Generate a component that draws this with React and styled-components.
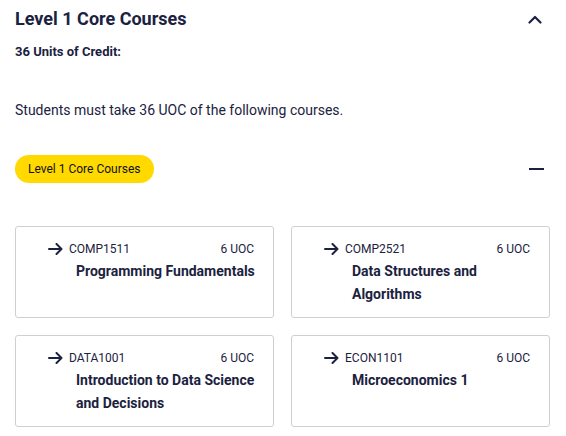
import React from "react";
import styled, { createGlobalStyle } from "styled-components";

const Global = createGlobalStyle`
  * { box-sizing: border-box; }
  body {
    margin: 0;
    background: #ffffff;
    font-family: Roboto, "Liberation Sans", Arial, sans-serif;
    color: #1b2240;
  }
`;

const Page = styled.div`
  width: 566px;
  padding: 5px 16px 0 15px;
`;

const HeaderRow = styled.div`
  display: flex;
  align-items: center;
  justify-content: space-between;
  height: 28px;
`;

const Title = styled.h2`
  margin: 0;
  font-size: 18px;
  font-weight: 700;
  line-height: 24px;
  color: #1b2240;
`;

const IconButton = styled.button`
  display: flex;
  align-items: center;
  justify-content: center;
  width: 24px;
  height: 24px;
  padding: 0;
  margin-right: ${(p) => p.$offset || 0}px;
  border: 0;
  background: none;
  color: #1b2240;
  cursor: pointer;
`;

const Credit = styled.div`
  margin-top: 10px;
  font-size: 13px;
  font-weight: 700;
  line-height: 18px;
`;

const Description = styled.p`
  margin: 39px 0 0;
  font-size: 14px;
  line-height: 20px;
`;

const GroupRow = styled.div`
  display: flex;
  align-items: center;
  justify-content: space-between;
  margin-top: 35px;
`;

const Pill = styled.span`
  display: inline-flex;
  align-items: center;
  height: 28px;
  padding: 0 13px;
  border-radius: 14px;
  background: #ffd900;
  color: #111111;
  font-size: 12px;
`;

const Grid = styled.div`
  display: grid;
  grid-template-columns: 1fr 1fr;
  gap: 17px;
  margin-top: 43px;
`;

const Card = styled.a`
  display: block;
  height: 92px;
  padding: 14px 12px 0 32px;
  border: 1px solid #cfcfcf;
  border-radius: 3px;
  background: #fff;
  color: #1b2240;
  text-decoration: none;
`;

const CodeRow = styled.div`
  display: flex;
  align-items: center;
  height: 16px;
  font-size: 12px;
`;

const Code = styled.span`
  margin-left: 6px;
  flex: 1;
`;

const Uoc = styled.span`
  margin-right: 7px;
`;

const CourseName = styled.div`
  margin: 3px 0 0 28px;
  font-size: 14px;
  font-weight: 700;
  line-height: 23px;
`;

const Arrow = () => (
  <svg width="15" height="12" viewBox="0 0 15 12" fill="none" stroke="currentColor" strokeWidth="2" strokeLinecap="round" strokeLinejoin="round">
    <path d="M1 6h12.5M8.5 1l5 5-5 5" />
  </svg>
);

const ChevronUp = () => (
  <svg width="14" height="9" viewBox="0 0 14 9" fill="none" stroke="currentColor" strokeWidth="2.2" strokeLinecap="round" strokeLinejoin="round">
    <path d="M1.5 7.5L7 2l5.5 5.5" />
  </svg>
);

const Minus = () => (
  <svg width="15" height="4" viewBox="0 0 15 4" fill="none" stroke="currentColor" strokeWidth="2">
    <path d="M0 2h15" />
  </svg>
);

const courses = [
  { code: "COMP1511", uoc: 6, name: "Programming Fundamentals" },
  { code: "COMP2521", uoc: 6, name: "Data Structures and Algorithms" },
  { code: "DATA1001", uoc: 6, name: "Introduction to Data Science and Decisions" },
  { code: "ECON1101", uoc: 6, name: "Microeconomics 1" },
];

export default function App() {
  return (
    <>
      <Global />
      <Page>
        <HeaderRow>
          <Title>Level 1 Core Courses</Title>
          <IconButton aria-label="Collapse" $offset={3}>
            <ChevronUp />
          </IconButton>
        </HeaderRow>
        <Credit>36 Units of Credit:</Credit>
        <Description>Students must take 36 UOC of the following courses.</Description>
        <GroupRow>
          <Pill>Level 1 Core Courses</Pill>
          <IconButton aria-label="Hide courses" $offset={2}>
            <Minus />
          </IconButton>
        </GroupRow>
        <Grid>
          {courses.map((c) => (
            <Card key={c.code} href="#">
              <CodeRow>
                <Arrow />
                <Code>{c.code}</Code>
                <Uoc>{c.uoc} UOC</Uoc>
              </CodeRow>
              <CourseName>{c.name}</CourseName>
            </Card>
          ))}
        </Grid>
      </Page>
    </>
  );
}
